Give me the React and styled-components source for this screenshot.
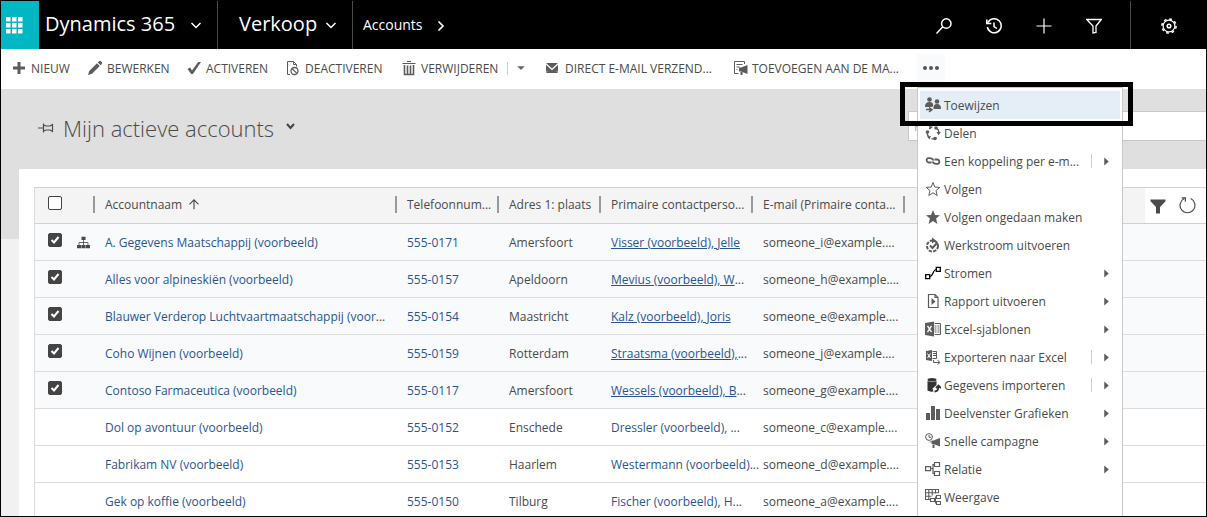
import React, { useState } from 'react'
import styled, { createGlobalStyle, css } from 'styled-components'

const GlobalStyle = createGlobalStyle`
  * { box-sizing: border-box; }
  body {
    margin: 0;
    background: #fff;
    color: #4a4a4a;
    font-family: 'Open Sans', 'Noto Sans', sans-serif;
    font-size: 12px;
  }
  button, input { font: inherit; color: inherit; }
  button { background: none; border: 0; padding: 0; cursor: pointer; }
  a { text-decoration: none; }
  svg { display: block; flex: none; }
`

const Frame = styled.div`
  height: 100vh;
  min-height: 400px;
  display: flex;
  flex-direction: column;
  overflow: hidden;
  border: 1px solid #000;
`

/* top navigation */

const TopNav = styled.header`
  display: flex;
  flex: none;
  height: 48px;
  background: #000;
  color: #fff;
`

const Waffle = styled.button`
  width: 38px;
  display: flex;
  align-items: center;
  padding-left: 5px;
  background: #00b7c3;
`

const NavButton = styled.button`
  display: flex;
  align-items: center;
  justify-content: space-between;
  width: ${(props) => props.$width}px;
  padding: 0 13px 2px ${(props) => props.$indent}px;
  color: #fff;
  font-size: ${(props) => props.$size}px;
  white-space: nowrap;
  svg { margin-top: 4px; }
  ${(props) =>
    props.$divider &&
    css`
      padding-bottom: 4px;
      border-right: 1px solid #4a4a4a;
    `}
`

const NavTools = styled.div`
  display: flex;
  margin-left: auto;
`

const NavTool = styled.button`
  width: 50px;
  display: flex;
  align-items: center;
  justify-content: center;
  padding-top: 2px;
`

const Settings = styled(NavTool)`
  width: 76px;
  margin-left: 11px;
  border-left: 1px solid #4a4a4a;
`

/* command bar */

const CommandBar = styled.div`
  position: relative;
  z-index: 2;
  display: flex;
  flex: none;
  align-items: center;
  height: 40px;
  padding: 0 0 2px 10px;
  background: #fff;
`

const CommandSlot = styled.div`
  display: flex;
  align-items: center;
  width: ${(props) => props.$width}px;
`

const Command = styled.button`
  display: flex;
  align-items: center;
  gap: 4px;
  white-space: nowrap;
  svg { color: #5c5c5c; }
`

const SplitButton = styled.button`
  display: flex;
  align-items: center;
  justify-content: center;
  width: 26px;
  height: 13px;
  margin-left: 9px;
  border-left: 1px solid #ccc;
  color: #666;
`

const MoreWrap = styled.div`
  position: relative;
  height: 28px;
`

const MoreButton = styled.button`
  display: flex;
  align-items: center;
  justify-content: center;
  width: 28px;
  height: 28px;
  background: #f8fafb;
`

const Menu = styled.ul`
  position: absolute;
  top: 33px;
  left: 0;
  width: 206px;
  height: 440px;
  margin: 0;
  padding: 3px 2px;
  list-style: none;
  background: #fff;
  border: 1px solid #c8c8c8;
`

const MenuItem = styled.button`
  display: flex;
  align-items: center;
  gap: 3px;
  width: 100%;
  height: 28px;
  padding: 0 0 0 5px;
  font-weight: 500;
  text-align: left;
  background: ${(props) => (props.$active ? '#e5eef7' : 'transparent')};
  svg { color: #5c5c5c; }
`

const MenuLabel = styled.span`
  flex: 1;
  white-space: nowrap;
`

const MenuArrow = styled.span`
  display: flex;
  align-items: center;
  justify-content: center;
  width: 29px;
  height: 14px;
  border-left: 1px solid ${(props) => (props.$split ? '#ccc' : 'transparent')};
`

const Highlight = styled.li`
  position: absolute;
  top: -6px;
  left: -18px;
  width: 233px;
  height: 44px;
  border: 5px solid #000;
  pointer-events: none;
`

/* view */

const Main = styled.main`
  flex: 1;
  min-height: 0;
  background: linear-gradient(#dfdfdf 150px, #f1f1f1 150px);
`

const ViewHeader = styled.div`
  display: flex;
  align-items: center;
  height: 80px;
  padding: 0 0 2px 37px;
`

const ViewTitle = styled.h1`
  margin: 0;
  padding-left: 9px;
  font-size: 22px;
  font-weight: 300;
  line-height: 30px;
`

const ViewSwitch = styled.button`
  padding: 0 12px 3px;
`

const Search = styled.input`
  width: 298px;
  height: 30px;
  margin: -4px 0 0 auto;
  padding: 0 5px;
  border: 1px solid #c8c8c8;
  border-right: 0;
  background: #fff;
  &::placeholder { color: #aaa; }
`

const Panel = styled.section`
  height: 100%;
  margin-left: 18px;
  padding: 18px 0 0 15px;
  background: #fff;
`

const Grid = styled.table`
  width: 100%;
  table-layout: fixed;
  border-collapse: separate;
  border-spacing: 0;
  border-left: 1px solid #ddd;
`

const Col = styled.col`
  width: ${(props) => (props.$width ? `${props.$width}px` : 'auto')};
`

const HeadCell = styled.th`
  height: 37px;
  padding: 0 0 3px;
  background: #f4f4f4;
  border-top: 1px solid #d0d0d0;
  border-bottom: 1px solid #d0d0d0;
  font-weight: 500;
  text-align: left;
  white-space: nowrap;
`

const HeadCheckCell = styled(HeadCell)`
  padding: 0 0 6px 13px;
`

const HeadInner = styled.div`
  display: flex;
  align-items: center;
  gap: 6px;
  height: 17px;
  padding-left: 10px;
  ${(props) =>
    props.$divider &&
    css`
      border-right: 2px solid #999;
    `}
`

const ToolCell = styled(HeadCell)`
  padding: 0;
`

const GridTools = styled.div`
  display: flex;
  align-items: center;
  gap: 13px;
  width: 61px;
  height: 35px;
  margin-left: auto;
  padding-left: 5px;
  background: #fff;
`

const Cell = styled.td`
  height: 37px;
  padding: 0 0 0 10px;
  white-space: nowrap;
  border-bottom: 1px solid #dcdcdc;
  background: ${(props) => (props.$selected ? '#f8fafc' : '#fff')};
`

const IconCell = styled(Cell)`
  padding: 0 0 0 4px;
`

const CheckCell = styled(Cell)`
  padding: 0 0 4px 13px;
`

const Link = styled.a`
  color: #2a5592;
  text-decoration: ${(props) => (props.$underlined ? 'underline' : 'none')};
`

const Check = styled.input`
  display: block;
  appearance: none;
  width: 14px;
  height: 14px;
  margin: 0;
  border: 1px solid #444;
  border-radius: 2px;
  background: #fff;
  &:checked {
    background: #444 url("data:image/svg+xml,%3Csvg xmlns='http://www.w3.org/2000/svg' viewBox='0 0 12 12'%3E%3Cpath d='M2.5 6l2.5 2.5 4.5-5.5' fill='none' stroke='white' stroke-width='2'/%3E%3C/svg%3E") center / 12px no-repeat;
  }
`

/* icons */

const icons = {
  plus: <path d="M6.500 2h3v4.500h4.500v3H9.500V14h-3V9.500H2v-3h4.500z" />,
  pencil: <path d="M1 15l1.200-4L10 3.200 12.800 6 5 13.800zM10.800 2.400L12 1.200q1-.8 2 0l.8.8q.8 1 0 2l-1.200 1.200z" />,
  check: <path d="M1.500 9l2.700-1.600L6 10.500 12.200 2H15L6.800 14H5.200z" />,
  deactivate: (
    <g fill="none" stroke="currentColor">
      <path d="M5 14.500H2.500v-13h6l3 3v2M8.500 1.500v3h3" />
      <circle cx="9.500" cy="11" r="3.500" strokeWidth="1.300" />
      <path d="M7.200 8.700l4.700 4.700" strokeWidth="1.300" />
    </g>
  ),
  trash: (
    <g fill="none" stroke="currentColor">
      <path d="M1.500 3.500h13M6 1.500h4" />
      <path d="M3.500 5v9.500h9V5M6.500 5.500v9M9.500 5.500v9" strokeWidth="1.600" />
    </g>
  ),
  mail: <path d="M1 3h12L7 8.500zM1 4.800l6 5.500 6-5.500V12l-2.500-2L13 13H1l2.500-3L1 12z" />,
  marketing: (
    <>
      <path d="M12.500 4V1.500h-10v12h4M4.500 4.500h6M4.500 7h3M4.500 9.500h1" fill="none" stroke="currentColor" />
      <path d="M7 7.500h2L15.500 5v9L9 11.500H7zM8.500 12h2v3h-2z" />
    </>
  ),
  assign: (
    <>
      <circle cx="4.500" cy="2.500" r="2.300" />
      <circle cx="12" cy="4.500" r="2.300" />
      <path d="M0 9.500Q0 5 4.500 5T8 9.500l-2 .5H0zM8.500 12q-.5-5 3.500-5t4 5z" />
      <path d="M1 12.500h5M4 10.500l3 2.200L4 15" fill="none" stroke="currentColor" strokeWidth="1.500" />
    </>
  ),
  share: (
    <>
      <path d="M4.200 4A6 6 0 0 1 6 2.200M10.500 2.300A6 6 0 0 1 13.800 8M11.500 12.800a6 6 0 0 1-5 .8M3.800 12A6 6 0 0 1 2.200 7" fill="none" stroke="currentColor" strokeWidth="1.300" />
      <circle cx="11" cy="3" r="1.800" /><circle cx="2.500" cy="7" r="1.800" /><circle cx="10" cy="13.500" r="1.800" />
      <path d="M4 1l4 .8-3 2.800zM11.500 7H16l-2.500 3.200zM2 11.500l4-.5-1.500 3.500z" />
    </>
  ),
  link: (
    <g fill="none" stroke="currentColor" strokeWidth="1.800">
      <path d="M8.500 7.500C7.500 5 5 5 3.500 5.200 1 5.500 1 9 3.500 9.500h3" />
      <path d="M7.500 8.500c1 2.500 3.500 2.500 5 2.300C15 10.500 15 7 12.500 6.500h-3" />
    </g>
  ),
  star: <path d="M8 1.500l1.900 4.600 4.900.3-3.800 3.200 1.200 4.900L8 11.800l-4.200 2.700L5 9.600 1.200 6.400l4.900-.3z" fill="none" stroke="currentColor" />,
  starFull: <path d="M8 1l2 4.900 5 .4-3.900 3.200L12.400 15 8 12l-4.400 3 1.300-5.500L1 6.300l5-.4z" />,
  workflow: (
    <g fill="none" stroke="currentColor" strokeWidth="2">
      <circle cx="7.500" cy="9" r="5.500" strokeDasharray="3.300 1.200" />
      <path d="M5 8.500l2.500 2.500 5-5.500" />
      <path d="M7 .5l4 3-4 3z" fill="currentColor" stroke="none" />
    </g>
  ),
  flow: (
    <g fill="none" stroke="#000">
      <path d="M.7 9.700h4v4h-4zM11.300 2.300h4v4h-4z" strokeWidth="1.300" />
      <path d="M5 11.500c3 0 3-7 6-7" strokeWidth="1.200" />
    </g>
  ),
  report: (
    <>
      <path d="M3.500 1.500h6.500l3 3v10H3.500zM10 1.500v3h3" fill="none" stroke="currentColor" strokeWidth="1.200" />
      <path d="M6.500 5l4 3.500-4 3.500z" />
    </>
  ),
  excel: (
    <>
      <path d="M0 2l9-1.500v15L0 14z" />
      <path d="M2.500 4.800l4 6.400M6.500 4.800l-4 6.400" stroke="#fff" strokeWidth="1.300" />
      <path d="M9.500 2.500h6v11h-6M9.500 5h2M9.500 7h2M9.500 9h2M9.500 11h2M12.500 5h2M12.500 7h2M12.500 9h2M12.500 11h2" fill="none" stroke="currentColor" />
    </>
  ),
  excelExport: (
    <>
      <path d="M1 2l6-1v11l-6-1z" />
      <path d="M2.500 4.500l3 4.500M5.500 4.500l-3 4.500" stroke="#fff" />
      <path d="M7.500 2.500h4v7h-4M8 4.500h3M8 6.500h3M8.500 11v2.500h6M12.500 11l2.500 2.500-2.500 2" fill="none" stroke="currentColor" />
    </>
  ),
  database: (
    <g color="#333">
      <ellipse cx="7" cy="2.800" rx="4.500" ry="1.800" fill="currentColor" />
      <path d="M2.500 4q4.500 2 9 0v4l-4 3.500 1 3q-4 .5-6-1z" fill="currentColor" />
      <path d="M9.500 14.500c3 0 4-1.500 4-5M11 11l2.500-2.500L16 11" fill="none" stroke="currentColor" strokeWidth="1.800" />
    </g>
  ),
  chart: <path d="M1 8h4v7H1zM6 1h4v14H6zM11 4h4v11h-4z" />,
  campaign: (
    <>
      <circle cx="4" cy="4" r="3.400" fill="none" stroke="currentColor" />
      <path d="M4 2v2.300H6M5 9.500l2-2" fill="none" stroke="currentColor" />
      <path d="M6.500 8l2-.5L15 5v8.500l-6.500-2.500h-2zM7.500 11.500h2V15h-2z" />
    </>
  ),
  relation: (
    <path d="M.6 5.600h5v4h-5zM9.500 1.500h5v4h-5zM9.500 10.500h5v4h-5zM5.600 7.500H8V3.500h1.500M8 7.500v5h1.500" fill="none" stroke="currentColor" strokeWidth="1.200" />
  ),
  view: (
    <g fill="none" stroke="currentColor" strokeWidth="1.100">
      <path d="M10.500 4.500v-4H.5v10h4.500M.5 3.800h13V.5H.5M.5 7.200h6M3.800.5v10M7.200.5v6M10.500.5v3" />
      <path d="M5.500 9.500h4v3h-4zM11.500 6.500h4v3h-4zM11.500 12.500h4v3h-4zM9.500 11h1v3h1M10.500 11V8h1" />
    </g>
  ),
  search: <path d="M.5 15.500l6.300-6.800M10.300.8a4.700 4.700 0 1 1 0 9.400 4.700 4.700 0 0 1 0-9.400z" fill="none" stroke="currentColor" strokeWidth="1.500" />,
  history: (
    <g fill="none" stroke="currentColor" strokeWidth="1.500">
      <path d="M2 4.500a7 7 0 1 1-.7 4.500M.8 1.500v4h4.500" />
      <path d="M8 4.500v4l3 2" />
    </g>
  ),
  navPlus: <path d="M8 .5v15M.5 8h15" stroke="currentColor" strokeWidth="1.200" />,
  navFilter: <path d="M.7 1.500h14.600L10 8v6.500l-3 .5V8z" fill="none" stroke="currentColor" strokeWidth="1.300" />,
  gear: (
    <g fill="none" stroke="currentColor">
      <circle cx="8" cy="8" r="7.100" strokeWidth="1.500" strokeDasharray="2.790 2.790" />
      <circle cx="8" cy="8" r="5.900" strokeWidth="1.200" />
      <circle cx="8" cy="8" r="1.800" strokeWidth="1.500" />
    </g>
  ),
  chevronDown: <path d="M3.500 6L8 10.500 12.500 6" fill="none" stroke="currentColor" strokeWidth="1.500" />,
  chevronRight: <path d="M5.500 3.500L10 8l-4.500 4.500" fill="none" stroke="currentColor" strokeWidth="1.700" />,
  caretDown: <path d="M2 5h12L8 11z" />,
  caretRight: <path d="M4 1l8 7-8 7z" />,
  pin: <path d="M0 8h5.500M5.500 3.500v9M5.500 5l2.500 1h4l2.500-1.500v7L12 10H8l-2.500 1" fill="none" stroke="currentColor" strokeWidth="1.200" />,
  sort: <path d="M8 15V2.500M2 8.500l6-6 6 6" fill="none" stroke="currentColor" strokeWidth="1.500" />,
  hierarchy: (
    <>
      <path d="M5.500 1h5v4h-5zM0 11h5v4H0zM5.500 11h5v4h-5zM11 11h5v4h-5z" />
      <path d="M2.500 11V8h11v3M8 5v6" fill="none" stroke="currentColor" />
    </>
  ),
  gridFilter: <path d="M.5 1.500h15v1.800L10 9v6.500H6V9L.5 3.300z" />,
  refresh: <path d="M5 1.500A7 7 0 1 0 11 1.500M2.500.8H6V4.500" fill="none" stroke="currentColor" strokeWidth="1.100" />,
}

function Icon({ name, size = 16 }) {
  return (
    <svg width={size} height={size} viewBox="0 0 16 16" fill="currentColor" aria-hidden="true">
      {icons[name]}
    </svg>
  )
}

const commands = [
  { label: 'NIEUW', icon: 'plus', width: 76 },
  { label: 'BEWERKEN', icon: 'pencil', width: 99 },
  { label: 'ACTIVEREN', icon: 'check', width: 99 },
  { label: 'DEACTIVEREN', icon: 'deactivate', width: 116 },
  { label: 'VERWIJDEREN', icon: 'trash', width: 144, split: true },
  { label: 'DIRECT E-MAIL VERZEND...', icon: 'mail', width: 187 },
  { label: 'TOEVOEGEN AAN DE MA...', icon: 'marketing', width: 185 },
]

const menuItems = [
  { label: 'Toewijzen', icon: 'assign', active: true },
  { label: 'Delen', icon: 'share' },
  { label: 'Een koppeling per e-m...', icon: 'link', arrow: true, split: true },
  { label: 'Volgen', icon: 'star' },
  { label: 'Volgen ongedaan maken', icon: 'starFull' },
  { label: 'Werkstroom uitvoeren', icon: 'workflow' },
  { label: 'Stromen', icon: 'flow', arrow: true },
  { label: 'Rapport uitvoeren', icon: 'report', arrow: true },
  { label: 'Excel-sjablonen', icon: 'excel', arrow: true },
  { label: 'Exporteren naar Excel', icon: 'excelExport', arrow: true, split: true },
  { label: 'Gegevens importeren', icon: 'database', arrow: true, split: true },
  { label: 'Deelvenster Grafieken', icon: 'chart', arrow: true },
  { label: 'Snelle campagne', icon: 'campaign', arrow: true },
  { label: 'Relatie', icon: 'relation', arrow: true },
  { label: 'Weergave', icon: 'view' },
]

const accounts = [
  { name: 'A. Gegevens Maatschappij (voorbeeld)', phone: '555-0171', city: 'Amersfoort', contact: 'Visser (voorbeeld), Jelle', email: 'someone_i@example....', parent: true },
  { name: 'Alles voor alpineskiën (voorbeeld)', phone: '555-0157', city: 'Apeldoorn', contact: 'Mevius (voorbeeld), W...', email: 'someone_h@example....' },
  { name: 'Blauwer Verderop Luchtvaartmaatschappij (voor...', phone: '555-0154', city: 'Maastricht', contact: 'Kalz (voorbeeld), Joris', email: 'someone_e@example....' },
  { name: 'Coho Wijnen (voorbeeld)', phone: '555-0159', city: 'Rotterdam', contact: 'Straatsma (voorbeeld),...', email: 'someone_j@example....' },
  { name: 'Contoso Farmaceutica (voorbeeld)', phone: '555-0117', city: 'Amersfoort', contact: 'Wessels (voorbeeld), B...', email: 'someone_g@example....' },
  { name: 'Dol op avontuur (voorbeeld)', phone: '555-0152', city: 'Enschede', contact: 'Dressler (voorbeeld), ...', email: 'someone_c@example....' },
  { name: 'Fabrikam NV (voorbeeld)', phone: '555-0153', city: 'Haarlem', contact: 'Westermann (voorbeeld)...', email: 'someone_d@example....' },
  { name: 'Gek op koffie (voorbeeld)', phone: '555-0150', city: 'Tilburg', contact: 'Fischer (voorbeeld), H...', email: 'someone_a@example....' },
]

const columns = [
  { label: 'Accountnaam', width: 302, sorted: true },
  { label: 'Telefoonnum...', width: 102 },
  { label: 'Adres 1: plaats', width: 102 },
  { label: 'Primaire contactperso...', width: 152 },
  { label: 'E-mail (Primaire conta...', width: 152 },
]

// the dots of a shortened value are not part of the link
function RecordLink({ text, underlined }) {
  const cut = text.endsWith('...')
  return (
    <>
      <Link href="#" $underlined={underlined}>{cut ? text.slice(0, -3) : text}</Link>
      {cut && '...'}
    </>
  )
}

function Navigation() {
  return (
    <TopNav>
      <Waffle aria-label="Apps">
        <svg width="17" height="17" viewBox="0 0 17 17" fill="#fff">
          {[0, 6, 12].map((y) => [0, 6, 12].map((x) => <rect key={`${x}-${y}`} x={x} y={y} width="4.500" height="4.500" />))}
        </svg>
      </Waffle>
      <NavButton $width={179} $indent={6} $size={20} $divider>Dynamics 365 <Icon name="chevronDown" /></NavButton>
      <NavButton $width={135} $indent={21} $size={20} $divider>Verkoop <Icon name="chevronDown" /></NavButton>
      <NavButton $width={109} $indent={10} $size={14}>Accounts <Icon name="chevronRight" /></NavButton>
      <NavTools>
        <NavTool aria-label="Zoeken"><Icon name="search" /></NavTool>
        <NavTool aria-label="Recent"><Icon name="history" /></NavTool>
        <NavTool aria-label="Toevoegen"><Icon name="navPlus" /></NavTool>
        <NavTool aria-label="Filter"><Icon name="navFilter" /></NavTool>
        <Settings aria-label="Instellingen"><Icon name="gear" /></Settings>
      </NavTools>
    </TopNav>
  )
}

function Commands() {
  return (
    <CommandBar>
      {commands.map((item) => (
        <CommandSlot key={item.label} $width={item.width}>
          <Command><Icon name={item.icon} />{item.label}</Command>
          {item.split && <SplitButton aria-label="Meer"><Icon name="caretDown" size={10} /></SplitButton>}
        </CommandSlot>
      ))}
      <MoreWrap>
        <MoreButton aria-label="Meer opdrachten">
          <svg width="16" height="16" viewBox="0 0 16 16" fill="#555">
            <circle cx="2" cy="8" r="2" /><circle cx="8" cy="8" r="2" /><circle cx="14" cy="8" r="2" />
          </svg>
        </MoreButton>
        <Menu>
          {menuItems.map((item) => (
            <li key={item.label}>
              <MenuItem $active={item.active}>
                <Icon name={item.icon} />
                <MenuLabel>{item.label}</MenuLabel>
                {item.arrow && <MenuArrow $split={item.split}><Icon name="caretRight" size={9} /></MenuArrow>}
              </MenuItem>
            </li>
          ))}
          <Highlight aria-hidden="true" />
        </Menu>
      </MoreWrap>
    </CommandBar>
  )
}

function AccountGrid() {
  const [selected, setSelected] = useState([0, 1, 2, 3, 4])
  return (
    <Grid>
      <colgroup>
        <Col $width={38} />
        <Col $width={22} />
        {columns.map((column) => <Col key={column.label} $width={column.width} />)}
        <Col />
      </colgroup>
      <thead>
        <tr>
          <HeadCheckCell>
            <Check type="checkbox" aria-label="Alles selecteren" />
          </HeadCheckCell>
          <HeadCell><HeadInner $divider /></HeadCell>
          {columns.map((column) => (
            <HeadCell key={column.label}>
              <HeadInner $divider>{column.label}{column.sorted && <Icon name="sort" size={12} />}</HeadInner>
            </HeadCell>
          ))}
          <ToolCell>
            <GridTools>
              <button aria-label="Filteren"><Icon name="gridFilter" /></button>
              <button aria-label="Vernieuwen"><Icon name="refresh" size={17} /></button>
            </GridTools>
          </ToolCell>
        </tr>
      </thead>
      <tbody>
        {accounts.map((account, index) => {
          const on = selected.includes(index)
          return (
            <tr key={account.name}>
              <CheckCell $selected={on}>
                {on && (
                  <Check
                    type="checkbox"
                    aria-label={account.name}
                    checked
                    onChange={() => setSelected(selected.filter((i) => i !== index))}
                  />
                )}
              </CheckCell>
              <IconCell $selected={on}>{account.parent && <Icon name="hierarchy" size={13} />}</IconCell>
              <Cell $selected={on}><RecordLink text={account.name} /></Cell>
              <Cell $selected={on}><RecordLink text={account.phone} /></Cell>
              <Cell $selected={on}>{account.city}</Cell>
              <Cell $selected={on}><RecordLink text={account.contact} underlined={on} /></Cell>
              <Cell $selected={on}>{account.email}</Cell>
              <Cell $selected={on} />
            </tr>
          )
        })}
      </tbody>
    </Grid>
  )
}

export default function App() {
  return (
    <Frame>
      <GlobalStyle />
      <Navigation />
      <Commands />
      <Main>
        <ViewHeader>
          <Icon name="pin" />
          <ViewTitle>Mijn actieve accounts</ViewTitle>
          <ViewSwitch aria-label="Weergave kiezen">
            <svg width="9" height="9" viewBox="0 0 9 9"><path d="M1 2l3.500 4L8 2" fill="none" stroke="#444" strokeWidth="2" /></svg>
          </ViewSwitch>
          <Search aria-label="Records zoeken" placeholder="Records zoeken" />
        </ViewHeader>
        <Panel>
          <AccountGrid />
        </Panel>
      </Main>
    </Frame>
  )
}
